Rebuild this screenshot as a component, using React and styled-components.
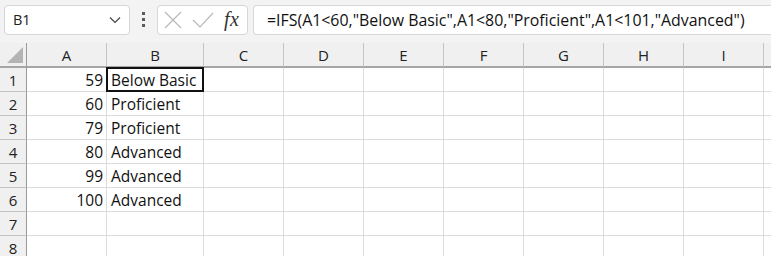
import React from 'react'
import styled, { createGlobalStyle } from 'styled-components'

const GlobalStyle = createGlobalStyle`
  html, body {
    margin: 0;
    padding: 0;
    background: #ffffff;
    overflow: hidden;
  }
  body {
    font-family: 'Open Sans', 'Noto Sans', sans-serif;
  }
`

const Page = styled.div`
  width: 771px;
  height: 256px;
  overflow: hidden;
  background: #ffffff;
`

const Toolbar = styled.div`
  display: flex;
  align-items: center;
  height: 43px;
  padding: 0 0 4px 4px;
  box-sizing: border-box;
  background: #f3f3f3;
`

const NameBox = styled.div`
  flex-shrink: 0;
  display: flex;
  align-items: center;
  justify-content: space-between;
  width: 126px;
  height: 30px;
  box-sizing: border-box;
  padding: 0 8px 0 8px;
  background: #ffffff;
  border: 1px solid #d6d6d6;
  border-radius: 4px;
  font-size: 14.5px;
  color: #222;
`

const Dots = styled.div`
  flex-shrink: 0;
  display: flex;
  flex-direction: column;
  align-items: center;
  gap: 3px;
  width: 27px;
  span {
    width: 3px;
    height: 3px;
    background: #5c5c5c;
  }
`

const ActionBox = styled.div`
  flex-shrink: 0;
  display: flex;
  align-items: center;
  width: 91px;
  height: 30px;
  box-sizing: border-box;
  padding: 0 0 0 6px;
  background: #ffffff;
  border: 1px solid #d6d6d6;
  border-radius: 4px;
  gap: 10px;
`

const Fx = styled.span`
  font-family: 'Liberation Serif', serif;
  font-style: italic;
  font-size: 20px;
  color: #333;
  letter-spacing: 0.5px;
`

const FormulaBox = styled.div`
  flex: 1;
  min-width: 0;
  display: flex;
  align-items: center;
  height: 30px;
  margin-left: 5px;
  box-sizing: border-box;
  padding-left: 13px;
  background: #ffffff;
  border: 1px solid #d6d6d6;
  border-right: none;
  border-radius: 4px 0 0 4px;
  font-size: 15.9px;
  color: #111;
  white-space: nowrap;
  overflow: hidden;
`

const Sheet = styled.div`
  display: grid;
  grid-template-columns: 27px 80px 97px repeat(7, 80px) 40px;
  grid-template-rows: 25px;
  grid-auto-rows: 24px;
  font-size: 15.5px;
  color: #111;
`

const Corner = styled.div`
  position: relative;
  background: #f0f0f0;
  border-right: 1px solid #9a9a9a;
  border-bottom: 2px solid #a6a6a6;
  &::after {
    content: '';
    position: absolute;
    right: 3px;
    bottom: 3px;
    width: 0;
    height: 0;
    border-left: 16px solid transparent;
    border-bottom: 16px solid #b4b4b4;
  }
`

const ColHead = styled.div`
  display: flex;
  align-items: center;
  justify-content: center;
  background: #f0f0f0;
  border-right: 1px solid #c4c4c4;
  border-bottom: 2px solid #a6a6a6;
  font-size: 15px;
  color: #222;
`

const RowHead = styled.div`
  display: flex;
  align-items: center;
  justify-content: center;
  background: #f0f0f0;
  border-right: 1px solid #9a9a9a;
  border-bottom: 1px solid #c4c4c4;
  font-size: 15px;
  color: #222;
`

const Cell = styled.div`
  position: relative;
  display: flex;
  align-items: center;
  justify-content: ${({ $num }) => ($num ? 'flex-end' : 'flex-start')};
  padding: 0 3px 0 4px;
  border-right: 1px solid #dcdcdc;
  border-bottom: 1px solid #dcdcdc;
  white-space: nowrap;
  &.active::after {
    content: '';
    position: absolute;
    left: -1px;
    top: -1px;
    right: -1px;
    bottom: -1px;
    border: 2px solid #111;
  }
`

const cols = ['A', 'B', 'C', 'D', 'E', 'F', 'G', 'H', 'I', '']

const data = [
  [59, 'Below Basic'],
  [60, 'Proficient'],
  [79, 'Proficient'],
  [80, 'Advanced'],
  [99, 'Advanced'],
  [100, 'Advanced'],
  ['', ''],
  ['', ''],
]

const Chevron = () => (
  <svg width="12" height="8" viewBox="0 0 12 8">
    <path d="M1 1.5 L6 6.5 L11 1.5" fill="none" stroke="#444" strokeWidth="1.2" />
  </svg>
)

const Cross = () => (
  <svg width="18" height="18" viewBox="0 0 18 18">
    <path d="M1 1 L17 17 M17 1 L1 17" stroke="#b8b8b8" strokeWidth="1.2" />
  </svg>
)

const Check = () => (
  <svg width="22" height="16" viewBox="0 0 22 16">
    <path d="M1 8 L8 15 L21 1" fill="none" stroke="#b8b8b8" strokeWidth="1.2" />
  </svg>
)

export default function App() {
  return (
    <Page>
      <GlobalStyle />
      <Toolbar>
        <NameBox>
          <span>B1</span>
          <Chevron />
        </NameBox>
        <Dots>
          <span />
          <span />
          <span />
        </Dots>
        <ActionBox>
          <Cross />
          <Check />
          <Fx>fx</Fx>
        </ActionBox>
        <FormulaBox>
          =IFS(A1&lt;60,"Below Basic",A1&lt;80,"Proficient",A1&lt;101,"Advanced")
        </FormulaBox>
      </Toolbar>
      <Sheet>
        <Corner />
        {cols.map((c, i) => (
          <ColHead key={i}>{c}</ColHead>
        ))}
        {data.map((row, r) => (
          <React.Fragment key={r}>
            <RowHead>{r + 1}</RowHead>
            <Cell $num>{row[0]}</Cell>
            <Cell className={r === 0 ? 'active' : ''}>{row[1]}</Cell>
            {cols.slice(2).map((c, i) => (
              <Cell key={i} />
            ))}
          </React.Fragment>
        ))}
      </Sheet>
    </Page>
  )
}
